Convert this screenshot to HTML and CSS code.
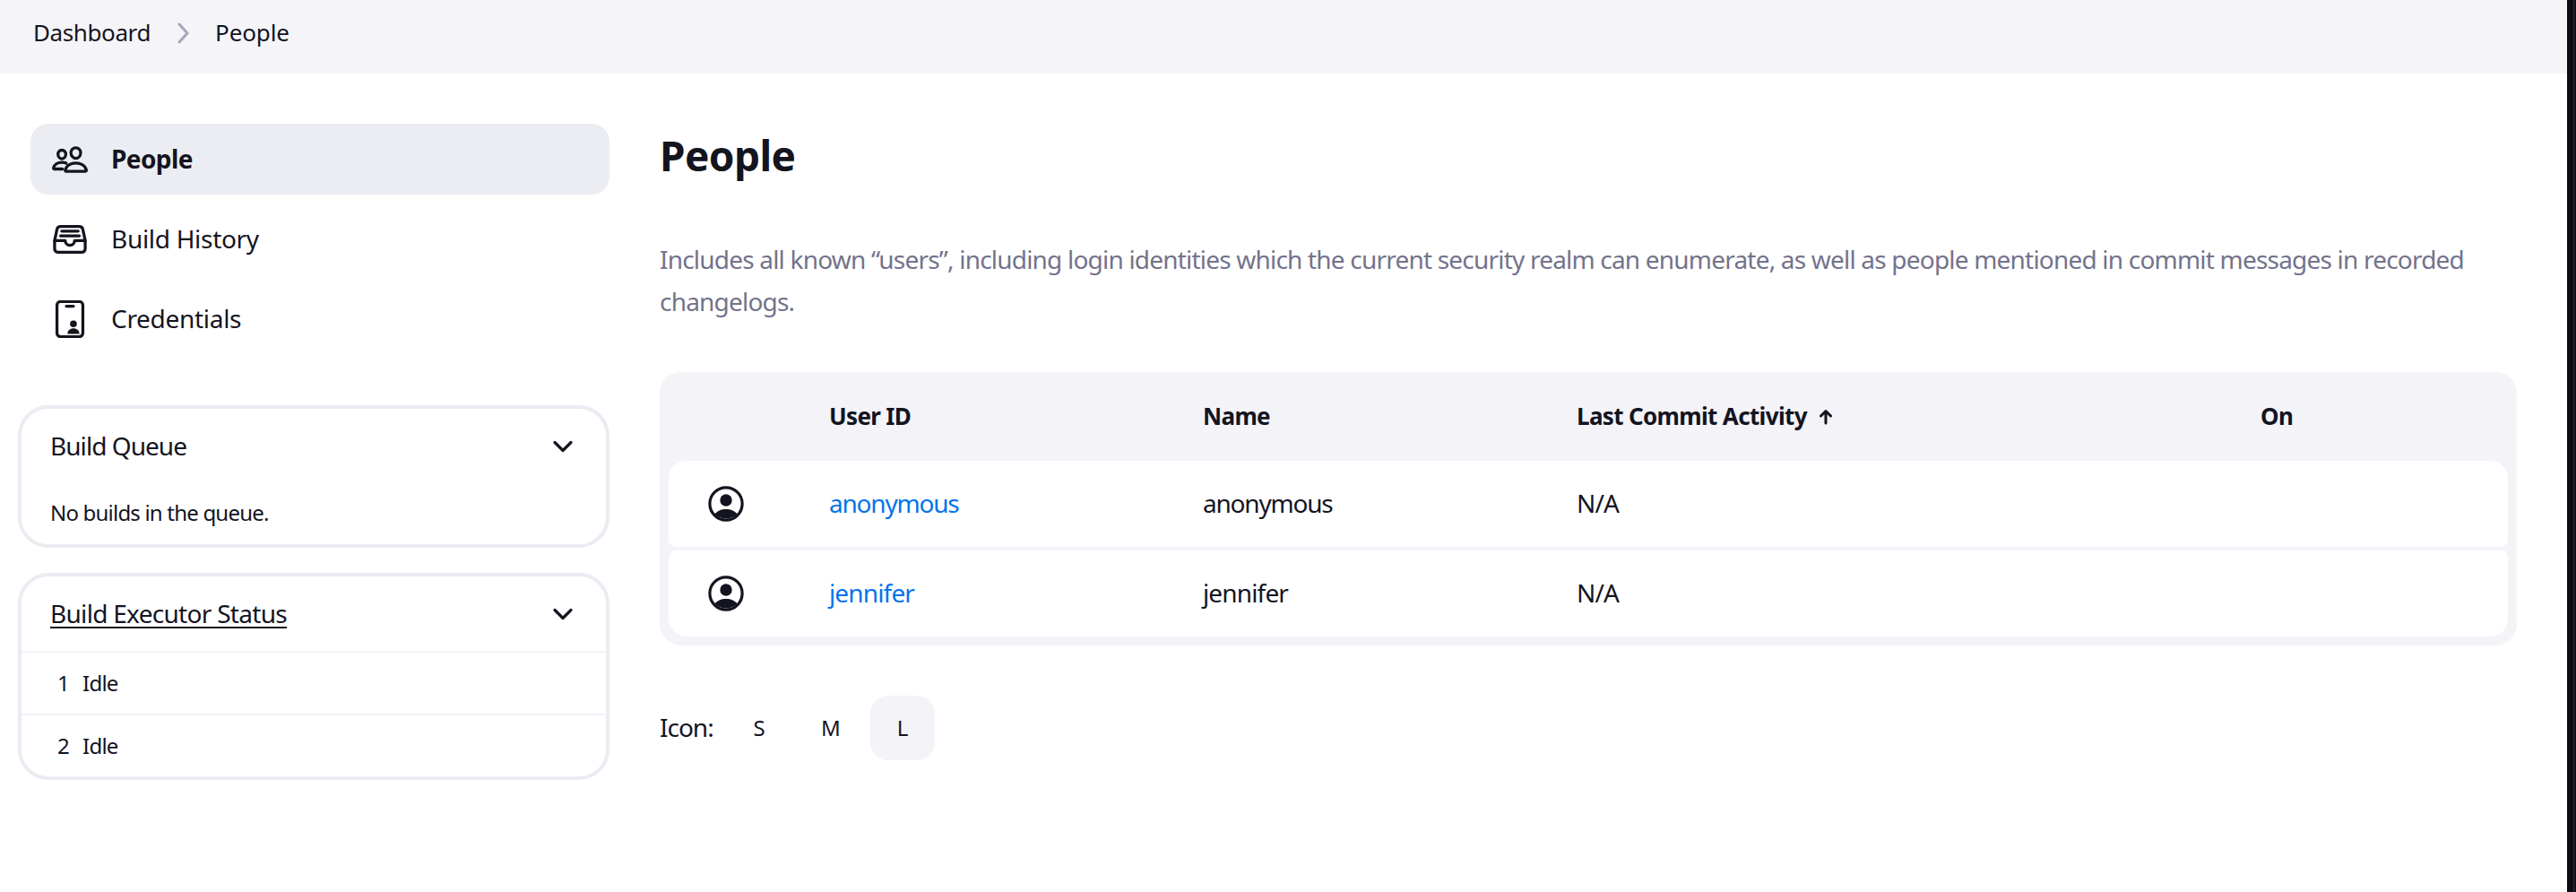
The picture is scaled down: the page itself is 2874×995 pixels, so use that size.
FILE: index.html
```html
<!DOCTYPE html>
<html lang="en">
<head>
<meta charset="utf-8">
<title>People [Jenkins]</title>
<link rel="stylesheet" href="styles.css">
</head>
<body>
<div class="app">
  <nav class="breadcrumbs">
    <a class="crumb crumb-dashboard">Dashboard</a>
    <svg class="crumb-sep" viewBox="0 0 14 28"><path d="M2 4l9 10-9 10"/></svg>
    <a class="crumb">People</a>
  </nav>
  <div class="page">
    <aside class="side">
      <div class="tasks">
        <a class="task active">
          <svg class="icon" viewBox="0 0 512 512"><path d="M402 168c-2.930 40.670-33.100 72-66 72s-63.120-31.320-66-72c-3-42.310 26.370-72 66-72s69 30.460 66 72z"/><path d="M336 304c-65.170 0-127.840 32.370-143.540 95.410-2.080 8.340 3.150 16.590 11.720 16.590h263.650c8.570 0 13.770-8.250 11.720-16.590C463.850 335.360 401.180 304 336 304z"/><path d="M200 185.940c-2.340 32.480-26.720 58.060-53 58.060s-50.700-25.570-53-58.060C91.610 152.150 115.340 128 147 128s55.390 24.770 53 57.940z"/><path d="M206 306c-18.050-8.270-37.930-11.450-59-11.450-52 0-102.100 25.850-114.650 76.200-1.650 6.660 2.530 13.250 9.370 13.250H154"/></svg>
          <span>People</span>
        </a>
        <a class="task">
          <svg class="icon" viewBox="0 0 512 512"><path d="M384 80H128c-26 0-43 14-48 40L48 272v112a48.140 48.140 0 0048 48h320a48.140 48.140 0 0048-48V272l-32-152c-5-27-23-40-48-40z"/><path d="M48 272h144M320 272h144M192 272a64 64 0 00128 0M144 144h224M128 208h256"/></svg>
          <span>Build History</span>
        </a>
        <a class="task">
          <svg class="icon" viewBox="0 0 512 512"><rect x="80" y="18" width="352" height="476" rx="48"/><path d="M208 80h96"/><g class="solid"><circle cx="304" cy="320" r="46"/><path d="M222 456c0-46 38-76 82-76s82 30 82 76z"/></g></svg>
          <span>Credentials</span>
        </a>
      </div>
      <section class="pane queue">
        <header class="pane-head"><span>Build Queue</span><svg class="chevron" viewBox="0 0 24 24"><path d="M3 7.500l9 9 9-9"/></svg></header>
        <p class="pane-empty">No builds in the queue.</p>
      </section>
      <section class="pane executors">
        <header class="pane-head"><a class="underlined">Build Executor Status</a><svg class="chevron" viewBox="0 0 24 24"><path d="M3 7.500l9 9 9-9"/></svg></header>
        <div class="executor"><span class="num">1</span><span>Idle</span></div>
        <div class="executor"><span class="num">2</span><span>Idle</span></div>
      </section>
    </aside>
    <main class="main">
      <h1>People</h1>
      <p class="description">Includes all known “users”, including login identities which the current security realm can enumerate, as well as people mentioned in commit messages in recorded changelogs.</p>
      <div class="table">
        <div class="row head"><span></span><span>User ID</span><span>Name</span><span class="sorted">Last Commit Activity<svg class="arrow" viewBox="0 0 16 18"><path d="M8 16V3M2.500 8L8 2.500 13.500 8"/></svg></span><span>On</span></div>
        <div class="row body first">
          <svg class="avatar" viewBox="0 0 40 40"><circle class="ring" cx="20" cy="20" r="18.100"/><circle cx="20" cy="16" r="6.700"/><path d="M7.500 31.500C10 28 14.500 26 20 26s10 2 12.500 5.500A18 18 0 017.500 31.500z"/></svg>
          <a class="link long">anonymous</a><span class="long">anonymous</span><span>N/A</span><span></span>
        </div>
        <div class="row body last">
          <svg class="avatar" viewBox="0 0 40 40"><circle class="ring" cx="20" cy="20" r="18.100"/><circle cx="20" cy="16" r="6.700"/><path d="M7.500 31.500C10 28 14.500 26 20 26s10 2 12.500 5.500A18 18 0 017.500 31.500z"/></svg>
          <a class="link">jennifer</a><span>jennifer</span><span>N/A</span><span></span>
        </div>
      </div>
      <div class="sizes"><span class="sizes-label">Icon:</span><a class="size">S</a><a class="size">M</a><a class="size selected">L</a></div>
    </main>
  </div>
</div>
<div class="edge"></div>
</body>
</html>
```
FILE: styles.css
```css
* { box-sizing: border-box; }
body {
  margin: 0;
  width: 2874px;
  height: 995px;
  overflow: hidden;
  display: flex;
  background: #fff;
  color: #14141f;
  font: 28px/1.2 "Noto Sans", sans-serif;
}
.app { flex: 1; min-width: 0; }
.edge { width: 10px; background: linear-gradient(to right, #0d0e15 7px, #2b2b36 7px 8px, #12131c 8px); }

.breadcrumbs {
  height: 82px;
  padding: 0 0 8px 37px;
  background: #f5f5f8;
  display: flex;
  align-items: center;
  font-size: 26px;
  letter-spacing: -0.1px;
}
.crumb-dashboard { letter-spacing: -0.4px; }
.crumb-sep { width: 14px; height: 28px; margin: 0 28px 0 30px; fill: none; stroke: #a6a6ba; stroke-width: 3; stroke-linecap: round; stroke-linejoin: round; }

.page { display: flex; }
.side { width: 680px; flex: none; padding: 56px 0 0 20px; }
.tasks { padding-left: 14px; display: flex; flex-direction: column; gap: 10px; }
.task { height: 79px; padding-left: 23px; display: flex; align-items: center; gap: 25px; border-radius: 20px; letter-spacing: -0.3px; }
.task.active { background: #ecedf3; font-weight: 700; letter-spacing: -0.6px; }
.icon { width: 42px; height: 42px; fill: none; stroke: currentColor; stroke-width: 40; stroke-linecap: round; stroke-linejoin: round; }
.solid { fill: currentColor; stroke: none; }

.pane { border: 4px solid #ebebf3; border-radius: 34px; letter-spacing: -0.75px; }
.queue { height: 159px; margin-top: 57px; }
.executors { height: 231px; margin-top: 28px; }
.pane-head { height: 83px; padding: 0 36px 0 32px; display: flex; align-items: center; justify-content: space-between; }
.queue .pane-head { letter-spacing: -0.95px; }
.chevron { width: 24px; height: 24px; fill: none; stroke: currentColor; stroke-width: 3.2; stroke-linecap: round; stroke-linejoin: round; }
.underlined { letter-spacing: -0.7px; text-decoration: underline; text-decoration-thickness: 2px; text-underline-offset: 4px; }
.pane-empty { margin: 19px 0 0 32px; font-size: 24px; letter-spacing: -0.8px; }
.executor { height: 70px; padding-left: 37px; border-top: 2px solid #f3f3f8; display: flex; align-items: center; gap: 15px; font-size: 24px; }
.num { width: 16px; text-align: right; }

.main { width: 2072px; flex: none; margin-left: 56px; padding-top: 61px; }
h1 { margin: 0; font-size: 46px; line-height: 60px; font-weight: 700; letter-spacing: -0.6px; }
.description { margin: 63px 0 0; color: #73738c; line-height: 47px; letter-spacing: -0.8px; }
.table { height: 305px; margin-top: 55px; padding: 0 10px 10px; background: #f3f3f8; border-radius: 24px; }
.row { display: grid; grid-template-columns: 179px 417px 417px 763px 1fr; align-items: center; letter-spacing: -0.85px; }
.head { height: 99px; font-size: 26px; font-weight: 700; letter-spacing: -0.65px; }
.body { height: 96px; background: #fff; }
.long { letter-spacing: -1.2px; }
.first { border-radius: 20px 20px 8px 8px; }
.last { margin-top: 4px; border-radius: 8px 8px 20px 20px; }
.avatar { width: 40px; height: 40px; margin-left: 44px; fill: currentColor; }
.ring { fill: none; stroke: currentColor; stroke-width: 3.2; }
.link { color: #0473ec; }
.arrow { width: 16px; height: 18px; margin-left: 13px; fill: none; stroke: currentColor; stroke-width: 3; stroke-linecap: round; stroke-linejoin: round; }

.sizes { margin-top: 56px; display: flex; align-items: center; gap: 8px; }
.sizes-label { width: 67px; letter-spacing: -1px; }
.size { width: 72px; height: 72px; border-radius: 20px; display: grid; place-items: center; font-size: 24px; }
.selected { background: #f3f3f8; }
```
